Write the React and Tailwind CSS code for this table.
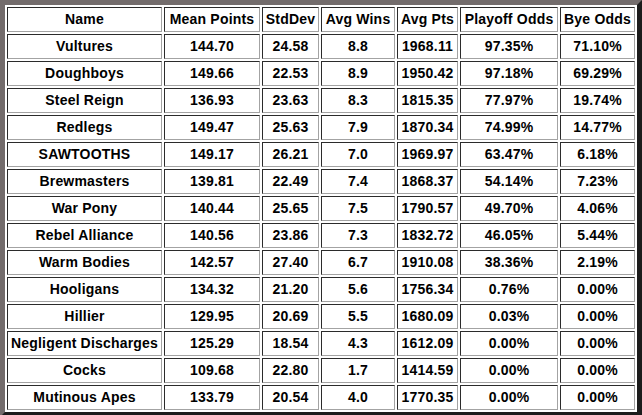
import React from "react";

const rows = [
  ["Vultures", "144.70", "24.58", "8.8", "1968.11", "97.35%", "71.10%"],
  ["Doughboys", "149.66", "22.53", "8.9", "1950.42", "97.18%", "69.29%"],
  ["Steel Reign", "136.93", "23.63", "8.3", "1815.35", "77.97%", "19.74%"],
  ["Redlegs", "149.47", "25.63", "7.9", "1870.34", "74.99%", "14.77%"],
  ["SAWTOOTHS", "149.17", "26.21", "7.0", "1969.97", "63.47%", "6.18%"],
  ["Brewmasters", "139.81", "22.49", "7.4", "1868.37", "54.14%", "7.23%"],
  ["War Pony", "140.44", "25.65", "7.5", "1790.57", "49.70%", "4.06%"],
  ["Rebel Alliance", "140.56", "23.86", "7.3", "1832.72", "46.05%", "5.44%"],
  ["Warm Bodies", "142.57", "27.40", "6.7", "1910.08", "38.36%", "2.19%"],
  ["Hooligans", "134.32", "21.20", "5.6", "1756.34", "0.76%", "0.00%"],
  ["Hillier", "129.95", "20.69", "5.5", "1680.09", "0.03%", "0.00%"],
  ["Negligent Discharges", "125.29", "18.54", "4.3", "1612.09", "0.00%", "0.00%"],
  ["Cocks", "109.68", "22.80", "1.7", "1414.59", "0.00%", "0.00%"],
  ["Mutinous Apes", "133.79", "20.54", "4.0", "1770.35", "0.00%", "0.00%"],
];

const headers = ["Name", "Mean Points", "StdDev", "Avg Wins", "Avg Pts", "Playoff Odds", "Bye Odds"];
const widths = ["w-[155px]", "w-[96px]", "w-[57px]", "w-[74px]", "w-[61px]", "w-[98px]", "w-[75px]"];

const cell =
  "border border-t-[#2b2b2b] border-l-[#2b2b2b] border-r-[#a3a3a3] border-b-[#a3a3a3] p-0 leading-[23px] text-center whitespace-nowrap";

export default function App() {
  return (
    <div className="w-[642px] h-[415px] overflow-hidden bg-[#f0f0f0]">
      <table
        className="table-fixed w-[642px] border-separate border-spacing-[2px] border-[5px] border-t-[#736c6c] border-l-[#736c6c] border-r-[#1c1c1c] border-b-[#1c1c1c] bg-white text-[14px] tracking-[0.2px] font-bold text-black"
        style={{ fontFamily: '"Liberation Sans", Arial, sans-serif' }}
      >
        <thead>
          <tr>
            {headers.map((h, i) => (
              <th key={h} className={`${cell} ${widths[i]} font-bold`}>
                {h}
              </th>
            ))}
          </tr>
        </thead>
        <tbody>
          {rows.map((r) => (
            <tr key={r[0]}>
              {r.map((v, i) => (
                <td key={i} className={cell}>
                  {v}
                </td>
              ))}
            </tr>
          ))}
        </tbody>
      </table>
    </div>
  );
}
